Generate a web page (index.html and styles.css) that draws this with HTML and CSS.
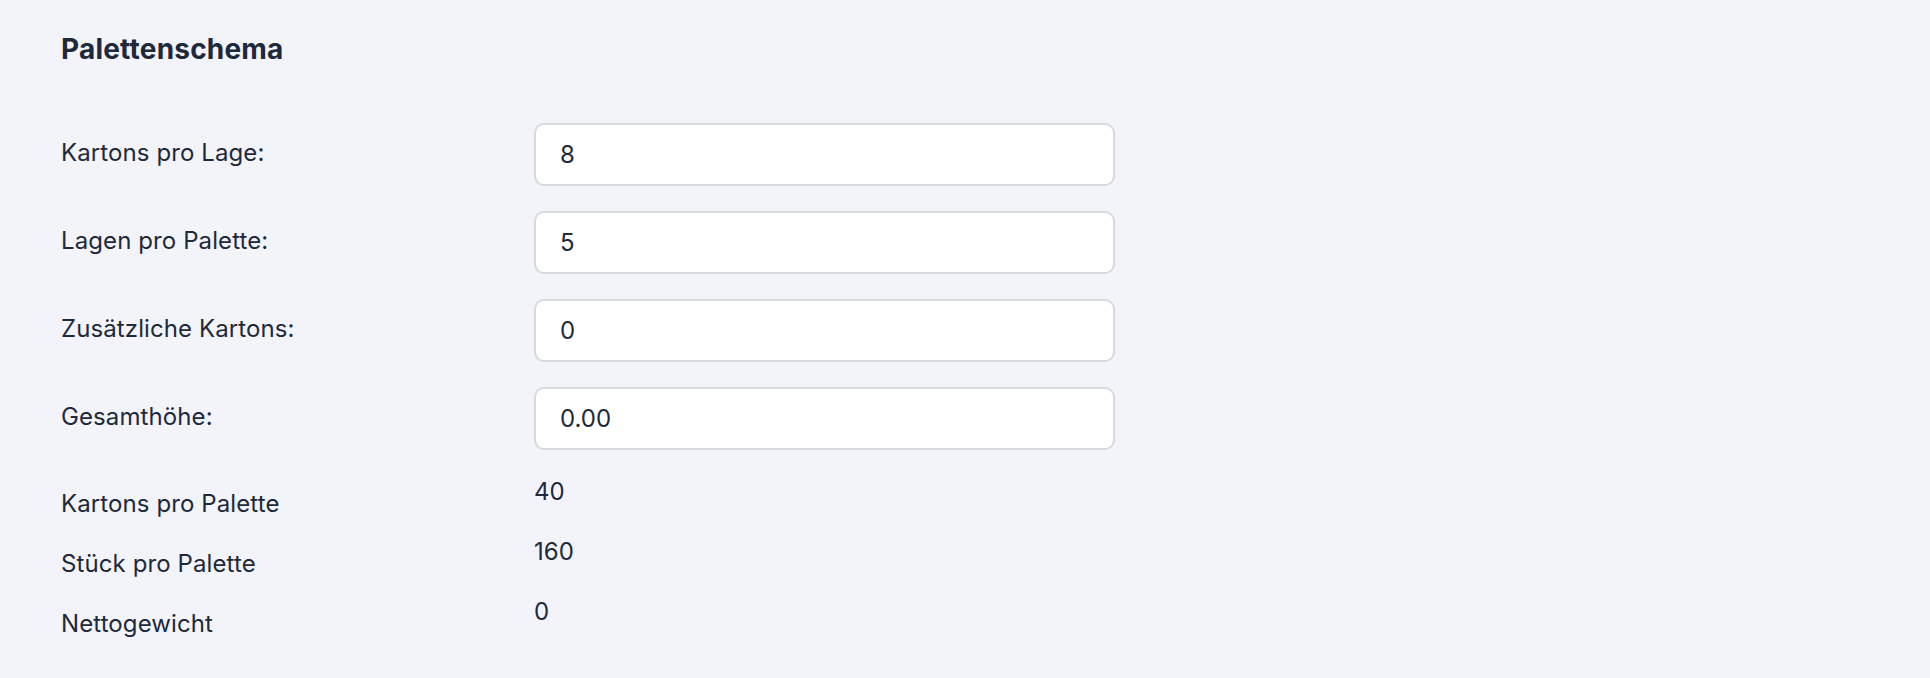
FILE: index.html
```html
<!DOCTYPE html>
<html lang="de">
<head>
<meta charset="utf-8">
<title>Palettenschema</title>
<link rel="stylesheet" href="styles.css">
</head>
<body>
<main class="page">
  <h2 class="title">Palettenschema</h2>
  <div class="form">
    <div class="row">
      <label class="label" for="k1">Kartons pro Lage:</label>
      <input class="field" id="k1" type="text" value="8">
    </div>
    <div class="row">
      <label class="label" for="k2">Lagen pro Palette:</label>
      <input class="field" id="k2" type="text" value="5">
    </div>
    <div class="row">
      <label class="label" for="k3">Zusätzliche Kartons:</label>
      <input class="field" id="k3" type="text" value="0">
    </div>
    <div class="row">
      <label class="label" for="k4">Gesamthöhe:</label>
      <input class="field" id="k4" type="text" value="0.00">
    </div>
  </div>
  <div class="stats">
    <div class="stat">
      <span class="stat-label">Kartons pro Palette</span>
      <span class="stat-value">40</span>
    </div>
    <div class="stat">
      <span class="stat-label">Stück pro Palette</span>
      <span class="stat-value">160</span>
    </div>
    <div class="stat">
      <span class="stat-label">Nettogewicht</span>
      <span class="stat-value">0</span>
    </div>
  </div>
</main>
</body>
</html>
```

FILE: styles.css
```css
html, body {
  margin: 0;
  padding: 0;
  background: #f3f4f9;
}
body {
  font-family: Inter, "Noto Sans", sans-serif;
  color: #1e293b;
}
.page {
  padding: 28px 60px 40px 61px;
}
.title {
  margin: 0;
  font-size: 28px;
  line-height: 42px;
  font-weight: 700;
  letter-spacing: 0.2px;
  color: #1e293b;
}
.form {
  margin-top: 53px;
  display: flex;
  flex-direction: column;
  gap: 25px;
}
.row {
  display: flex;
  align-items: flex-start;
}
.label {
  width: 473px;
  flex: none;
  font-size: 24px;
  line-height: 36px;
  letter-spacing: 0.1px;
  padding-top: 12px;
}
.field {
  box-sizing: border-box;
  width: 581px;
  height: 63px;
  margin: 0;
  padding: 0 24px;
  border: 2px solid #d6d9e0;
  border-radius: 10px;
  background: #ffffff;
  font-family: Inter, "Noto Sans", sans-serif;
  font-size: 24px;
  color: #1e293b;
  outline: none;
}
.stats {
  margin-top: 24px;
  display: flex;
  flex-direction: column;
  gap: 12px;
}
.stat {
  display: flex;
  align-items: flex-start;
  font-size: 24px;
  line-height: 36px;
}
.stat-label {
  width: 473px;
  flex: none;
  padding-top: 12px;
  letter-spacing: 0.1px;
}
.stat-value {
  display: block;
}
```
